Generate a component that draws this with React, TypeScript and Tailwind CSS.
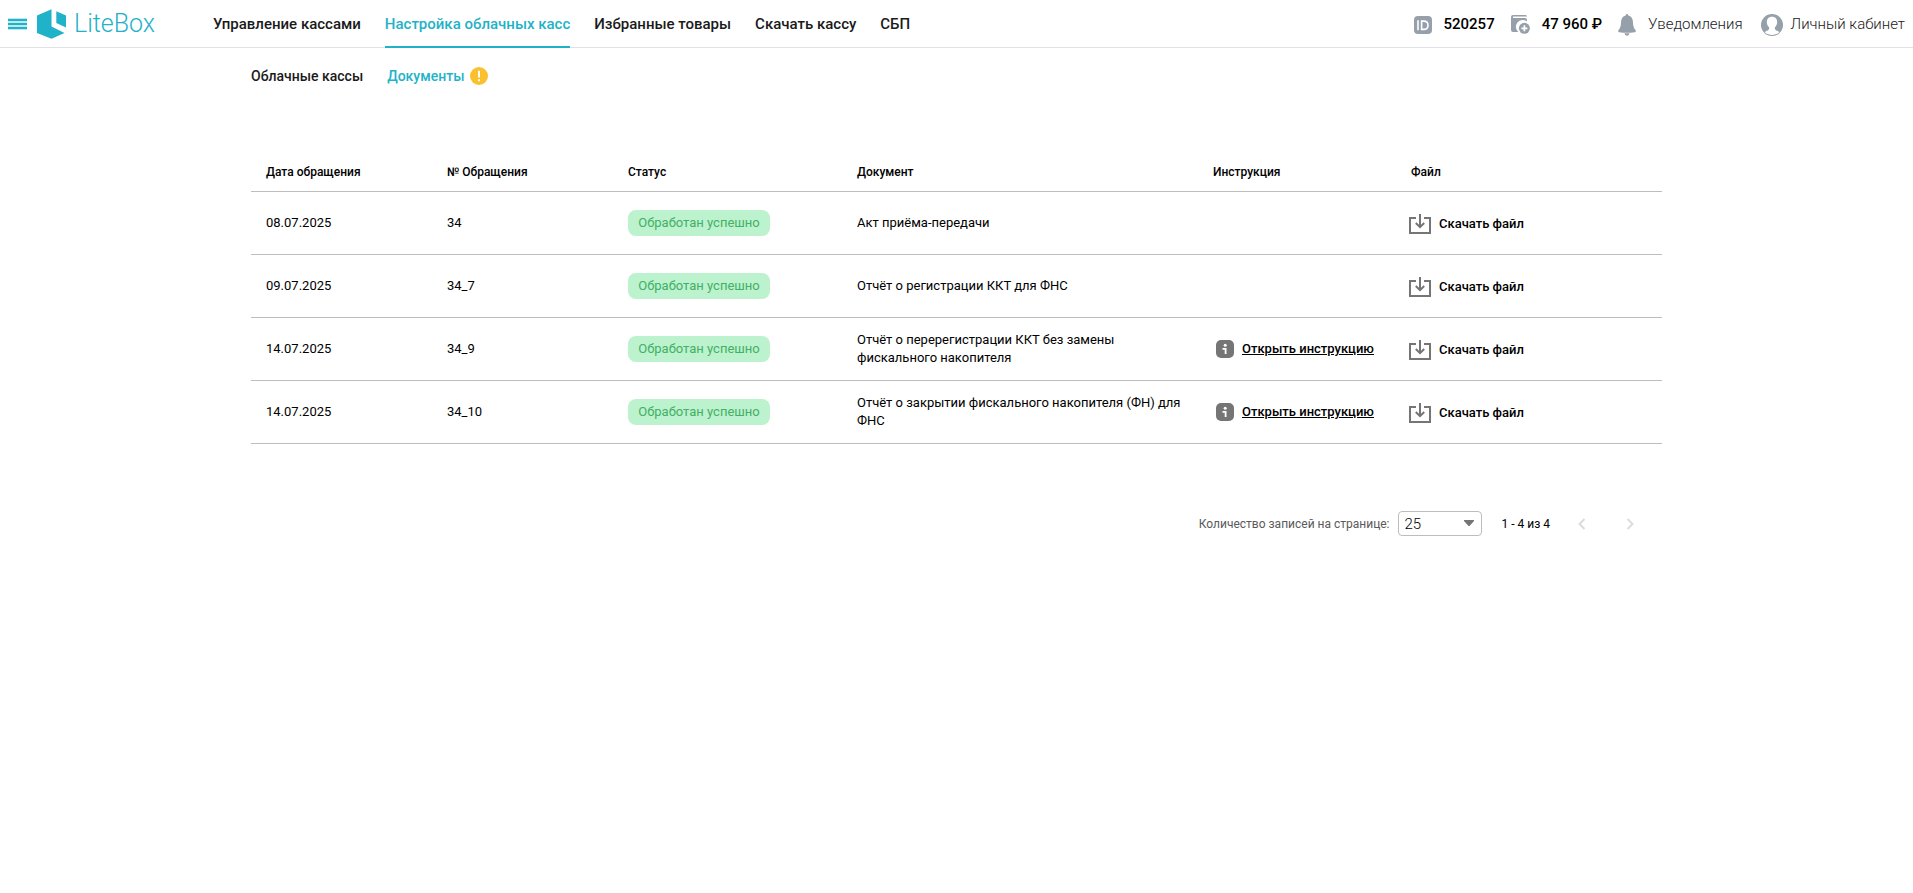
import React from "react";

type Doc = { date: string; num: string; title: string; hasGuide: boolean };

const docs: Doc[] = [
  { date: "08.07.2025", num: "34", title: "Акт приёма-передачи", hasGuide: false },
  { date: "09.07.2025", num: "34_7", title: "Отчёт о регистрации ККТ для ФНС", hasGuide: false },
  { date: "14.07.2025", num: "34_9", title: "Отчёт о перерегистрации ККТ без замены фискального накопителя", hasGuide: true },
  { date: "14.07.2025", num: "34_10", title: "Отчёт о закрытии фискального накопителя (ФН) для ФНС", hasGuide: true },
];

const nav = ["Управление кассами", "Настройка облачных касс", "Избранные товары", "Скачать кассу", "СБП"];

const columns = ["Дата обращения", "№ Обращения", "Статус", "Документ", "Инструкция", "Файл"];

function Logo() {
  return (
    <a href="#" className="flex items-center gap-2 text-[#1fb2c8]">
      <svg width="29" height="30" viewBox="0 0 29 30" fill="currentColor" aria-hidden="true">
        <path d="M14.5 0.2v17.3l13 6.6-13 5.7L0 24V6.4z" />
        <path d="M19.3 2.2 29 6.4v12.2l-9.7-4.7z" />
      </svg>
      <span className="text-[25px] leading-8 font-light">LiteBox</span>
    </a>
  );
}

function IdIcon() {
  return (
    <svg width="18" height="18" viewBox="0 0 18 18" aria-hidden="true">
      <rect width="18" height="18" rx="4" fill="#96a0aa" />
      <path d="M4 4.300v9.900M7.600 5.100v8.300h2.200c2.700 0 4.200-1.500 4.200-4.150s-1.500-4.150-4.200-4.150z" fill="none" stroke="#fff" strokeWidth="1.600" />
    </svg>
  );
}

function WalletIcon() {
  return (
    <svg width="19" height="19" viewBox="0 0 19 19" aria-hidden="true">
      <path d="M2 0h12.500a1.500 1.500 0 0 1 1.500 1.500H2.600a.8.8 0 0 0 0 1.600H14a2 2 0 0 1 2 2v1.400A6.500 6.500 0 0 0 7.400 17H2a2 2 0 0 1-2-2V2a2 2 0 0 1 2-2z" fill="#96a0aa" />
      <circle cx="13.4" cy="13.3" r="5.500" fill="#96a0aa" />
      <path d="M13.4 10.3v6M10.400 13.300h6" stroke="#fff" strokeWidth="1.700" />
    </svg>
  );
}

function BellIcon() {
  return (
    <svg width="18" height="22" viewBox="0 0 18 22" fill="#96a0aa" aria-hidden="true">
      <path d="M9 0c.8 0 1.2.7 1.3 1.6 3 .7 4.500 3 4.600 6 .1 4.400.9 6.800 2.700 8.700.6.800.3 1.700-.8 1.900-5.200.800-10.400.800-15.600 0-1.100-.2-1.400-1.100-.8-1.900 1.800-1.900 2.600-4.300 2.700-8.700.1-3 1.600-5.300 4.600-6C7.800.7 8.200 0 9 0z" />
      <path d="M6.500 19.300h5c-.2 1.400-1.200 2.400-2.500 2.400s-2.300-1-2.500-2.400z" />
    </svg>
  );
}

function UserIcon() {
  return (
    <svg width="22" height="22" viewBox="0 0 22 22" aria-hidden="true">
      <circle cx="11" cy="11" r="11" fill="#96a0aa" />
      <path d="M11 2.700c3.300 0 5.200 2.200 5.200 5.400 0 2.100-.9 4-2.300 5.200-.3 1.500.2 2.600 1.600 3.200 1.200.5 2.200 1 2.900 1.700A10 10 0 0 1 11 21a10 10 0 0 1-7.400-2.800c.7-.7 1.700-1.200 2.900-1.700 1.400-.6 1.900-1.700 1.600-3.200-1.400-1.200-2.300-3.100-2.300-5.200 0-3.200 1.900-5.400 5.200-5.400z" fill="#fff" />
    </svg>
  );
}

function DownloadIcon() {
  return (
    <svg width="22" height="20" viewBox="0 0 22 20" fill="none" stroke="#757575" strokeWidth="2" aria-hidden="true">
      <path d="M7 4H1v15h20V4h-6" />
      <path d="M11 0v13M6.800 9l4.200 4.200L15.200 9" />
    </svg>
  );
}

function InfoIcon() {
  return (
    <svg width="18" height="18" viewBox="0 0 18 18" aria-hidden="true">
      <rect width="18" height="18" rx="5" fill="#757575" />
      <circle cx="9.200" cy="5.200" r="1.500" fill="#fff" />
      <path d="M6.500 8.800h3.100V14" fill="none" stroke="#fff" strokeWidth="1.800" />
    </svg>
  );
}

function WarningIcon() {
  return (
    <svg width="18" height="18" viewBox="0 0 18 18" aria-hidden="true">
      <circle cx="9" cy="9" r="9" fill="#fbc02d" />
      <path d="M9 3.700v6.800M9 12.300v2" stroke="#fff" strokeWidth="2" />
    </svg>
  );
}

export default function App() {
  return (
    <div className="min-h-screen bg-white font-['Roboto',sans-serif] text-black">
      <header className="flex h-12 items-center border-b border-[#e0e0e6] px-2">
        <button type="button" aria-label="Меню" className="mr-2.5">
          <svg width="19" height="12" viewBox="0 0 19 12" aria-hidden="true">
            <path d="M0 0h19v12H0z" fill="#bfe9ef" />
            <path d="M0 2h19M0 6h19M0 10h19" stroke="#1fb2c8" strokeWidth="2" />
          </svg>
        </button>
        <div className="w-44 shrink-0">
          <Logo />
        </div>
        <nav className="flex h-12 gap-6 text-[15px] font-medium whitespace-nowrap">
          {nav.map((label, i) => (
            <a
              key={label}
              href="#"
              className={
                i === 1
                  ? "flex items-center border-b-2 border-[#1fb2c8] pt-1 text-[#1fb2c8]"
                  : "flex items-center border-b-2 border-transparent pt-1 text-[#1a1a1a]"
              }
            >
              {label}
            </a>
          ))}
        </nav>
        <div className="ml-auto flex items-center pt-0.5 text-[15px] whitespace-nowrap">
          <div className="mr-4 flex items-center gap-3 font-medium">
            <IdIcon />
            520257
          </div>
          <a href="#" className="mr-4 flex items-center gap-3 font-medium">
            <WalletIcon />
            47 960 ₽
          </a>
          <a href="#" className="mr-[18px] flex items-center gap-3 font-light text-[#1a1a1a]">
            <BellIcon />
            Уведомления
          </a>
          <a href="#" className="flex items-center gap-2 font-light text-[#1a1a1a]">
            <UserIcon />
            Личный кабинет
          </a>
        </div>
      </header>

      <main className="mx-auto max-w-[1411px]">
        <nav className="flex h-14 items-center gap-6 text-sm font-medium">
          <a href="#" className="text-[#1a1a1a]">Облачные кассы</a>
          <a href="#" className="flex items-center gap-1.5 text-[#1fb2c8]">
            Документы
            <WarningIcon />
          </a>
        </nav>

        <table className="mt-12 w-full table-fixed border-separate border-spacing-0 text-left text-[13px] leading-[18px]">
          <colgroup>
            <col className="w-[181px]" />
            <col className="w-[181px]" />
            <col className="w-[229px]" />
            <col className="w-[356px]" />
            <col className="w-[198px]" />
            <col />
          </colgroup>
          <thead>
            <tr className="h-10 text-xs">
              {columns.map((c) => (
                <th key={c} scope="col" className="border-b border-[#bdbdbd] px-[15px] font-medium">
                  {c}
                </th>
              ))}
            </tr>
          </thead>
          <tbody>
            {docs.map((d) => (
              <tr key={d.num} className="h-[63px]">
                <td className="border-b border-[#bdbdbd] px-[15px]">{d.date}</td>
                <td className="border-b border-[#bdbdbd] px-[15px]">{d.num}</td>
                <td className="border-b border-[#bdbdbd] px-[15px]">
                  <span className="inline-flex h-[26px] min-w-[142px] items-center justify-center rounded-lg bg-[#bcf2cd] px-2 text-[#42b066]">
                    Обработан успешно
                  </span>
                </td>
                <td className="border-b border-[#bdbdbd] px-[15px]">{d.title}</td>
                <td className="border-b border-[#bdbdbd] pl-[18px] font-medium whitespace-nowrap">
                  {d.hasGuide && (
                    <a href="#" className="flex items-center gap-2">
                      <InfoIcon />
                      <span className="underline">Открыть инструкцию</span>
                    </a>
                  )}
                </td>
                <td className="border-b border-[#bdbdbd] px-[13px] pt-0.5 font-medium whitespace-nowrap">
                  <button type="button" className="flex items-center gap-2">
                    <DownloadIcon />
                    Скачать файл
                  </button>
                </td>
              </tr>
            ))}
          </tbody>
        </table>

        <div className="mt-[67px] flex items-center justify-end pr-6 text-xs">
          <label htmlFor="page-size" className="mr-2 text-[#5a5a5a]">Количество записей на странице:</label>
          <div className="relative mr-5">
            <select
              id="page-size"
              defaultValue="25"
              className="block h-[25px] w-[84px] appearance-none rounded border border-[#bdbdbd] bg-white pl-1.5 text-[15px] leading-5 font-light"
            >
              <option>25</option>
              <option>50</option>
              <option>100</option>
            </select>
            <svg className="pointer-events-none absolute top-[9px] right-2" width="10" height="6" viewBox="0 0 10 6" aria-hidden="true">
              <path d="M0 0h10v1L5.500 6h-1L0 1z" fill="#757575" />
            </svg>
          </div>
          <span className="mr-6">1 - 4 из 4</span>
          <button type="button" disabled aria-label="Предыдущая страница" className="mr-8 flex size-4 items-center justify-center">
            <svg width="8" height="12" viewBox="0 0 8 12" fill="none" stroke="#dcdcdc" strokeWidth="2" aria-hidden="true">
              <path d="M6.500 1 1.500 6l5 5" />
            </svg>
          </button>
          <button type="button" disabled aria-label="Следующая страница" className="flex size-4 items-center justify-center">
            <svg width="8" height="12" viewBox="0 0 8 12" fill="none" stroke="#dcdcdc" strokeWidth="2" aria-hidden="true">
              <path d="M1.500 1l5 5-5 5" />
            </svg>
          </button>
        </div>
      </main>
    </div>
  );
}
